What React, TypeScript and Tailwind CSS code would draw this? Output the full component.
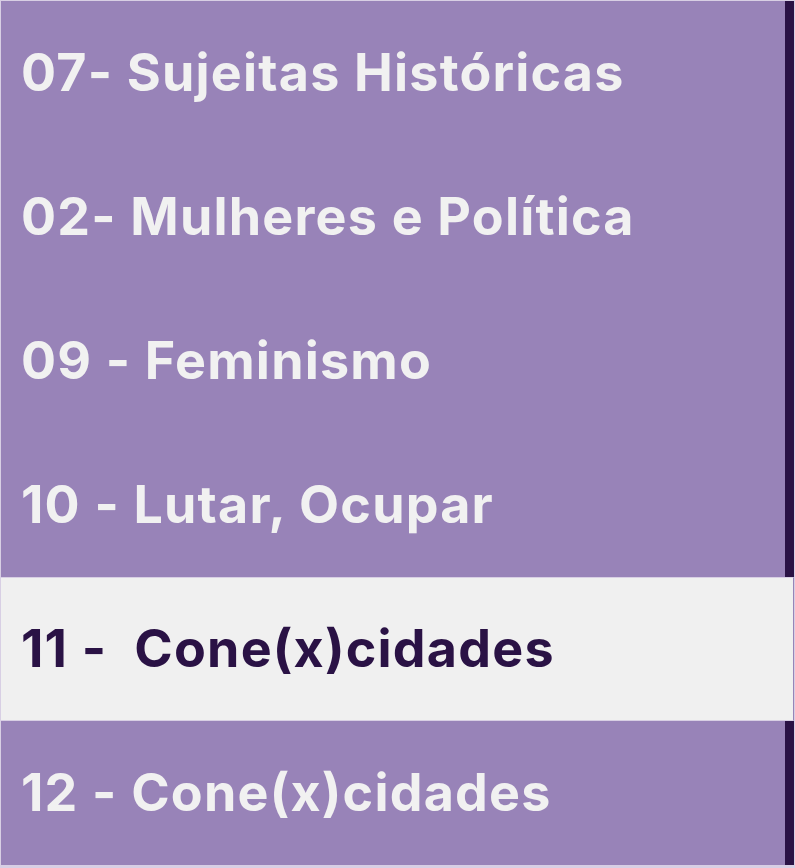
const items = [
  { label: '07- Sujeitas Históricas', active: false },
  { label: '02- Mulheres e Política', active: false },
  { label: '09 - Feminismo', active: false },
  { label: '10 - Lutar, Ocupar', active: false },
  { label: '11 -  Cone(x)cidades', active: true },
  { label: '12 - Cone(x)cidades', active: false },
];

export default function App() {
  return (
    <div className="w-[795px] h-[868px] bg-[#d8cfe4] p-px" style={{ fontFamily: 'Inter, "Open Sans", sans-serif' }}>
      <ul className="flex flex-col h-[866px]">
        {items.map((item) => (
          <li
            key={item.label}
            className={
              item.active
                ? 'flex h-[144px] items-center bg-[#f0f0f0] pl-[20px] border-r border-[#9883b8] border-y border-y-[#d8cfe4]'
                : 'flex h-[144px] items-center bg-[#9883b8] pl-[20px] border-r-[9px] border-[#2a1245]'
            }
          >
            <span
              className={
                item.active
                  ? 'text-[52px] font-bold tracking-[1.2px] text-[#2a1245] whitespace-pre'
                  : 'text-[52px] font-bold tracking-[1.2px] text-[#f1f1f1] whitespace-pre'
              }
            >
              {item.label}
            </span>
          </li>
        ))}
      </ul>
    </div>
  );
}
